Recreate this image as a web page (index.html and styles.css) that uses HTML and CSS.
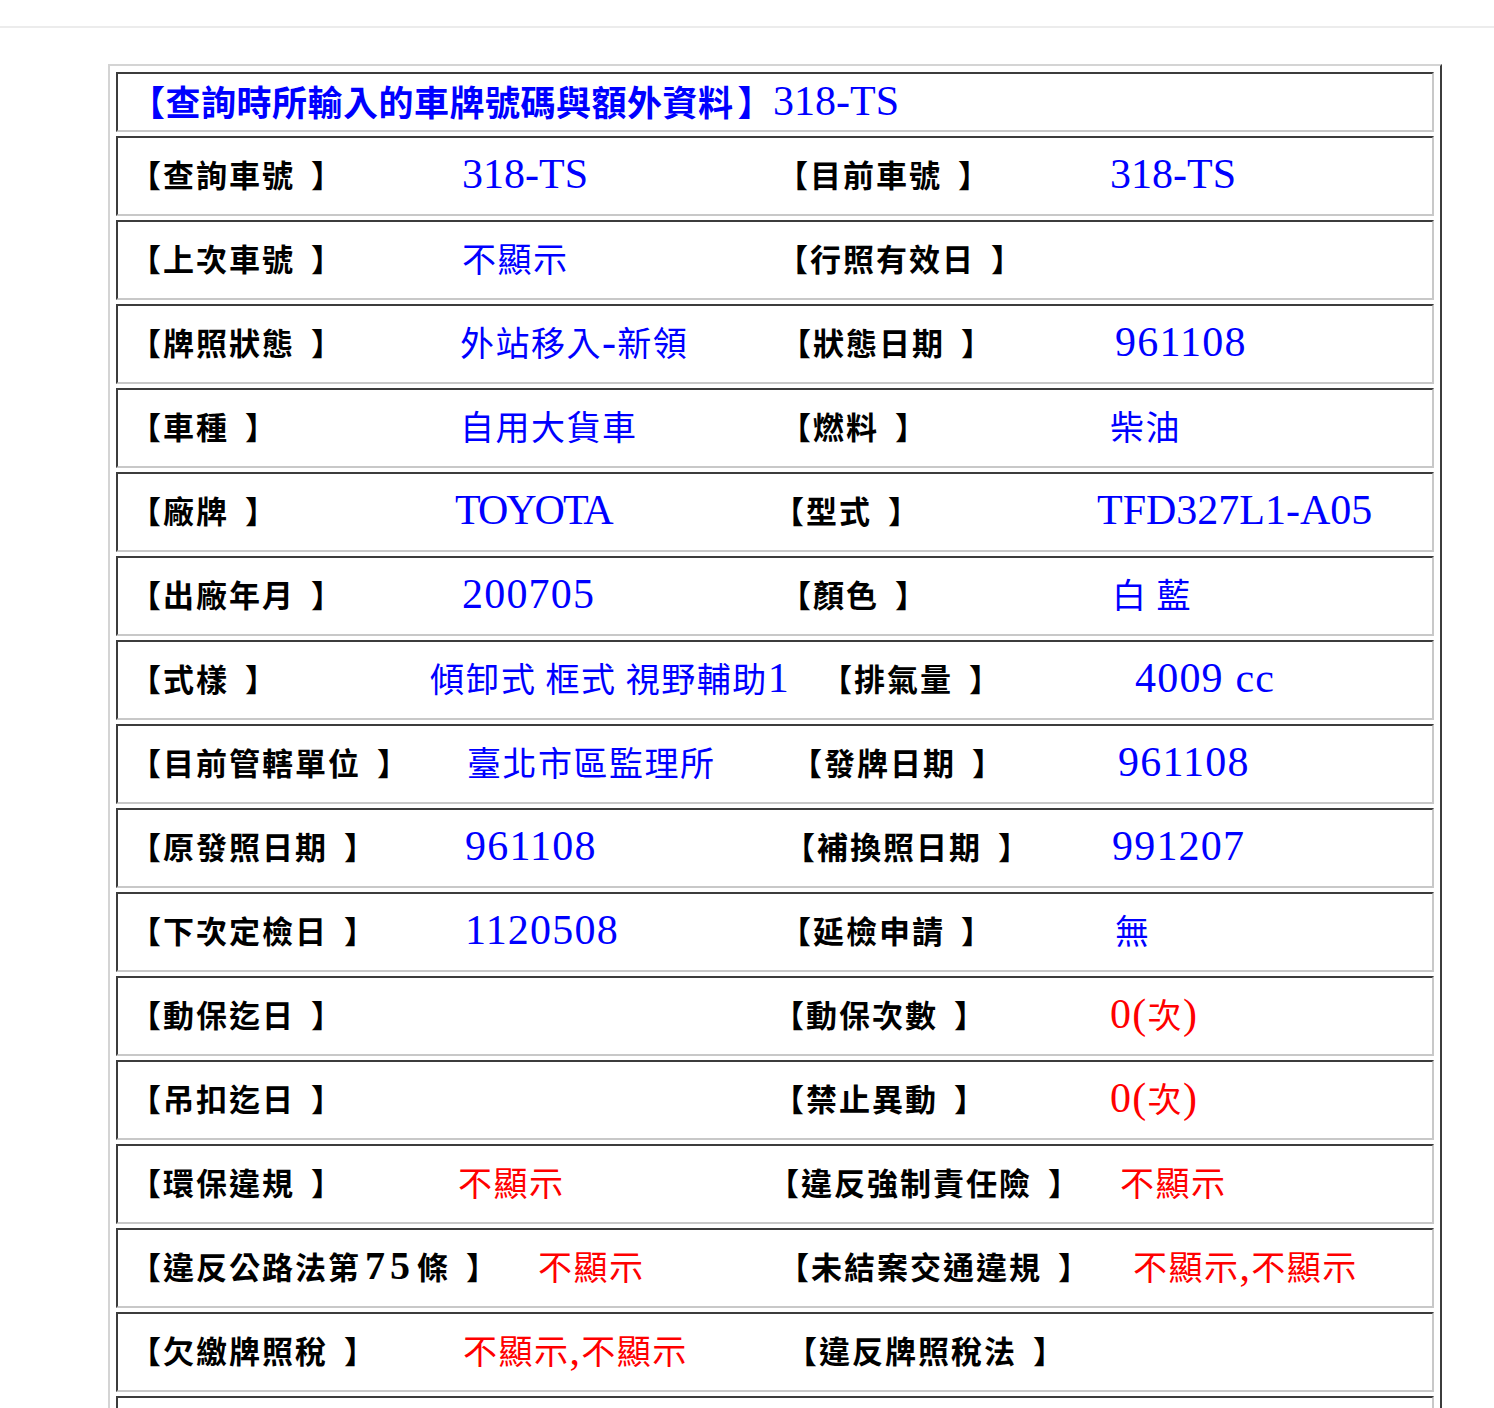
FILE: index.html
```html
<!DOCTYPE html>
<html lang="zh-Hant">
<head>
<meta charset="utf-8">
<title>車籍資料查詢</title>
<link rel="stylesheet" href="styles.css">
</head>
<body>
<div class="topbar"></div>
<div class="sheet">
  <div class="cell head">【查詢時所輸入的車牌號碼與額外資料<span class="hb">】</span><span class="lat reg">318-TS</span></div>

  <div class="cell row r1">
    <span class="lbl">【查詢車號<span class="cb">】</span></span><span class="val"><span class="lat plate">318-TS</span></span>
    <span class="lbl">【目前車號<span class="cb">】</span></span><span class="val"><span class="lat plate">318-TS</span></span>
  </div>
  <div class="cell row r2">
    <span class="lbl">【上次車號<span class="cb">】</span></span><span class="val">不顯示</span>
    <span class="lbl">【行照有效日<span class="cb">】</span></span><span class="val"></span>
  </div>
  <div class="cell row r3">
    <span class="lbl">【牌照狀態<span class="cb">】</span></span><span class="val">外站移入<span class="lat">-</span>新領</span>
    <span class="lbl">【狀態日期<span class="cb">】</span></span><span class="val"><span class="lat">961108</span></span>
  </div>
  <div class="cell row r4">
    <span class="lbl">【車種<span class="cb">】</span></span><span class="val">自用大貨車</span>
    <span class="lbl">【燃料<span class="cb">】</span></span><span class="val">柴油</span>
  </div>
  <div class="cell row r5">
    <span class="lbl">【廠牌<span class="cb">】</span></span><span class="val"><span class="lat brand">TOYOTA</span></span>
    <span class="lbl">【型式<span class="cb">】</span></span><span class="val"><span class="lat model">TFD327L1-A05</span></span>
  </div>
  <div class="cell row r6">
    <span class="lbl">【出廠年月<span class="cb">】</span></span><span class="val"><span class="lat">200705</span></span>
    <span class="lbl">【顏色<span class="cb">】</span></span><span class="val">白 藍</span>
  </div>
  <div class="cell row r7">
    <span class="lbl">【式樣<span class="cb">】</span></span><span class="val">傾卸式 框式 視野輔助<span class="lat">1</span></span>
    <span class="lbl">【排氣量<span class="cb">】</span></span><span class="val"><span class="lat">4009 cc</span></span>
  </div>
  <div class="cell row r8">
    <span class="lbl">【目前管轄單位<span class="cb">】</span></span><span class="val">臺北市區監理所</span>
    <span class="lbl">【發牌日期<span class="cb">】</span></span><span class="val"><span class="lat">961108</span></span>
  </div>
  <div class="cell row r9">
    <span class="lbl">【原發照日期<span class="cb">】</span></span><span class="val"><span class="lat">961108</span></span>
    <span class="lbl">【補換照日期<span class="cb">】</span></span><span class="val"><span class="lat">991207</span></span>
  </div>
  <div class="cell row r10">
    <span class="lbl">【下次定檢日<span class="cb">】</span></span><span class="val"><span class="lat">1120508</span></span>
    <span class="lbl">【延檢申請<span class="cb">】</span></span><span class="val">無</span>
  </div>
  <div class="cell row r11">
    <span class="lbl">【動保迄日<span class="cb">】</span></span><span class="val"></span>
    <span class="lbl">【動保次數<span class="cb">】</span></span><span class="val red"><span class="lat">0(</span>次<span class="lat">)</span></span>
  </div>
  <div class="cell row r11">
    <span class="lbl">【吊扣迄日<span class="cb">】</span></span><span class="val"></span>
    <span class="lbl">【禁止異動<span class="cb">】</span></span><span class="val red"><span class="lat">0(</span>次<span class="lat">)</span></span>
  </div>
  <div class="cell row r13">
    <span class="lbl">【環保違規<span class="cb">】</span></span><span class="val red">不顯示</span>
    <span class="lbl">【違反強制責任險<span class="cb">】</span></span><span class="val red">不顯示</span>
  </div>
  <div class="cell row r14">
    <span class="lbl">【違反公路法第<span class="lat num75">75</span>條<span class="cb">】</span></span><span class="val red">不顯示</span>
    <span class="lbl">【未結案交通違規<span class="cb">】</span></span><span class="val red">不顯示<span class="lat">,</span>不顯示</span>
  </div>
  <div class="cell row r15">
    <span class="lbl">【欠繳牌照稅<span class="cb">】</span></span><span class="val red">不顯示<span class="lat">,</span>不顯示</span>
    <span class="lbl">【違反牌照稅法<span class="cb">】</span></span><span class="val"></span>
  </div>
  <div class="cell row">
    <span class="lbl"></span><span class="val"></span>
    <span class="lbl"></span><span class="val"></span>
  </div>
</div>
</body>
</html>
```
FILE: styles.css
```css
html, body {
  margin: 0;
  padding: 0;
  background: #ffffff;
}

body {
  font-family: "Noto Sans CJK TC", "Liberation Serif", sans-serif;
  color: #000;
}

.topbar {
  height: 26px;
  border-bottom: 2px solid #ececec;
}

.sheet {
  margin: 36px 0 0 108px;
  width: 1334px;
  box-sizing: border-box;
  border: 2px solid;
  border-color: #d4d4d4 #3c3c3c #3c3c3c #d4d4d4;
  padding: 6px;
  display: flex;
  flex-direction: column;
  gap: 4px;
}

.cell {
  box-sizing: border-box;
  border: 2px solid;
  border-color: #3c3c3c #c8c8c8 #c8c8c8 #3c3c3c;
  padding: 0 12px;
}

.head {
  height: 60px;
  padding-bottom: 3px;
  display: flex;
  align-items: center;
  color: #0000ff;
  font-weight: 700;
  font-size: 35px;
  letter-spacing: 0.5px;
  white-space: nowrap;
}

.hb {
  margin-left: 4px;
}

.row {
  height: 80px;
  padding-bottom: 6px;
  display: grid;
  align-items: center;
  grid-template-columns: 332px 315px 333px 1fr;
  white-space: nowrap;
}

.lbl {
  font-weight: 700;
  font-size: 31px;
  letter-spacing: 2px;
  color: #000;
}

.cb {
  margin-left: 16px;
}

.val {
  font-size: 34px;
  letter-spacing: 1.5px;
  color: #0000ff;
}

.val.red {
  color: #ff0000;
}

.lat {
  font-family: "Liberation Serif", serif;
  font-size: 42px;
  letter-spacing: 1.2px;
}

.lat.reg {
  font-weight: 400;
  letter-spacing: 0;
}

.lat.plate {
  letter-spacing: 0;
}

.lat.brand {
  letter-spacing: -2px;
}

.lat.model {
  letter-spacing: 0;
}

.num75 {
  font-size: 40px;
  letter-spacing: 5px;
  margin: 0 2px 0 4px;
}

.r3 { grid-template-columns: 330px 320px 335px 1fr; }
.r4 { grid-template-columns: 330px 320px 330px 1fr; }
.r5 { grid-template-columns: 325px 318px 324px 1fr; }
.r6 { grid-template-columns: 332px 318px 332px 1fr; }
.r7 { grid-template-columns: 300px 391px 314px 1fr; }
.r8 { grid-template-columns: 337px 324px 327px 1fr; }
.r9 { grid-template-columns: 335px 319px 328px 1fr; }
.r10 { grid-template-columns: 335px 315px 335px 1fr; }
.r11 { grid-template-columns: 332px 311px 337px 1fr; }
.r13 { grid-template-columns: 328px 310px 352px 1fr; }
.r14 { grid-template-columns: 408px 240px 355px 1fr; }
.r15 { grid-template-columns: 333px 323px 325px 1fr; }
```
